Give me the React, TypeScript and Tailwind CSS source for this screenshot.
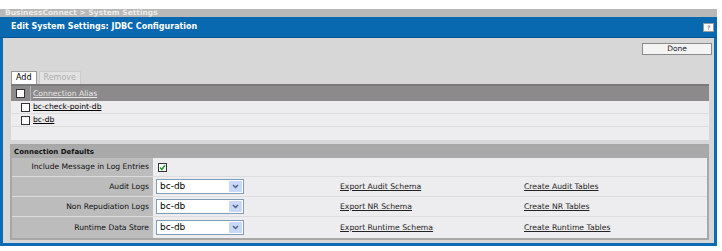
import React from "react";

const font = { fontFamily: '"DejaVu Sans", Verdana, sans-serif' };

const rows = [
  { label: "Audit Logs", exp: "Export Audit Schema", create: "Create Audit Tables" },
  { label: "Non Repudiation Logs", exp: "Export NR Schema", create: "Create NR Tables" },
  { label: "Runtime Data Store", exp: "Export Runtime Schema", create: "Create Runtime Tables" },
];

function Box({ checked }: { checked?: boolean }) {
  return (
    <span className="inline-flex h-[9px] w-[9px] items-center justify-center border border-[#333] bg-white">
      {checked && (
        <svg width="7" height="7" viewBox="0 0 7 7">
          <path d="M1 3.5 L2.8 5.5 L6 1.2" stroke="#22a022" strokeWidth="1.5" fill="none" />
        </svg>
      )}
    </span>
  );
}

function Select() {
  return (
    <div className="flex h-[15px] w-[88px] items-center border border-[#7f9db9] bg-white">
      <span className="flex-1 pl-[3px] text-[9px] text-black">bc-db</span>
      <span className="mr-[1px] flex h-[11px] w-[13px] items-center justify-center rounded-[1px] bg-[#c9d8f7]">
        <svg width="7" height="5" viewBox="0 0 7 5">
          <path d="M1 1 L3.5 3.5 L6 1" stroke="#4d6185" strokeWidth="1.5" fill="none" />
        </svg>
      </span>
    </div>
  );
}

export default function App() {
  return (
    <div className="h-[251px] w-[722px] bg-white pt-[9px]" style={font}>
      <div className="w-[717px]">
        <div className="flex h-[8px] items-center bg-[#b9b9b9] pl-[5px] text-[7.5px] font-bold leading-none text-[#ececec]">
          BusinessConnect &gt; System Settings
        </div>
        <div className="flex h-[21px] items-center justify-between border-b border-[#04528d] bg-[#0868b0] pl-[11px] pr-[3px]">
          <span className="text-[8px] font-bold text-white">Edit System Settings: JDBC Configuration</span>
          <span className="flex h-[9px] w-[11px] items-center justify-center border border-[#999] bg-white text-[6px] text-[#333]">
            ?
          </span>
        </div>
        <div className="border-x-[3px] border-b-[3px] border-[#0b6cb5] bg-[#d7d7d7] pb-[3px] pl-[7px] pr-[5px] pt-[4px]">
          <div className="flex justify-end">
            <button className="mr-[-3px] mt-[1px] h-[12px] w-[70px] border border-[#8a8a8a] bg-[#f4f4f4] text-[7.5px] leading-none text-[#222]">
              Done
            </button>
          </div>
          <div className="mt-[16px] flex gap-[2px] pl-[1px]">
            <span className="flex h-[13px] items-center border border-b-0 border-[#999] bg-white px-[4px] text-[8px] text-black">
              Add
            </span>
            <span className="flex h-[13px] items-center border border-b-0 border-[#ccc] bg-[#e2e2e2] px-[4px] text-[8px] text-[#b0b0b0]">
              Remove
            </span>
          </div>
          <div className="ml-[1px] bg-[#edecee]">
            <div className="flex h-[17px] items-center border-t-2 border-[#7a7a7a] bg-[#8c8a8b]">
              <span className="flex h-full w-[20px] items-center justify-center border-r border-[#b5b5b5]">
                <Box />
              </span>
              <span className="pl-[2px] text-[7.7px] text-[#e8e8e8] underline">Connection Alias</span>
            </div>
            {["bc-check-point-db", "bc-db"].map((n) => (
              <div key={n} className="flex h-[13px] items-center border-b border-[#dcdcdc]">
                <span className="flex w-[20px] justify-end pr-[1px]">
                  <Box />
                </span>
                <span className="pl-[2px] text-[7.6px] text-black underline">{n}</span>
              </div>
            ))}
            <div className="h-[13px]" />
          </div>
          <div className="mt-[4px] border-2 border-[#a7a7a7] bg-[#edecee]">
            <div className="flex h-[12px] items-center bg-[#a9a9a9] pl-[2px] text-[7px] font-bold text-[#111]">
              Connection Defaults
            </div>
            <div className="flex h-[19px] border-b border-[#dddddd]">
              <div className="flex w-[141px] items-center justify-end bg-[#bcbcbc] pr-[4px] text-[7.6px] text-[#111]">
                Include Message in Log Entries
              </div>
              <div className="flex items-center pl-[5px]">
                <Box checked />
              </div>
            </div>
            {rows.map((r, i) => (
              <div
                key={r.label}
                className={`flex ${i < 2 ? "h-[20px] border-b border-[#dddddd]" : "h-[21px]"}`}
              >
                <div className="flex w-[141px] items-center justify-end bg-[#bcbcbc] pr-[4px] text-[7.6px] text-[#111]">
                  {r.label}
                </div>
                <div className="flex items-center pl-[3px]">
                  <Select />
                </div>
                <div className="flex items-center pl-[96px] text-[7.7px] text-[#222] underline">
                  <span className="w-[184px]">{r.exp}</span>
                  <span>{r.create}</span>
                </div>
              </div>
            ))}
          </div>
        </div>
      </div>
    </div>
  );
}
